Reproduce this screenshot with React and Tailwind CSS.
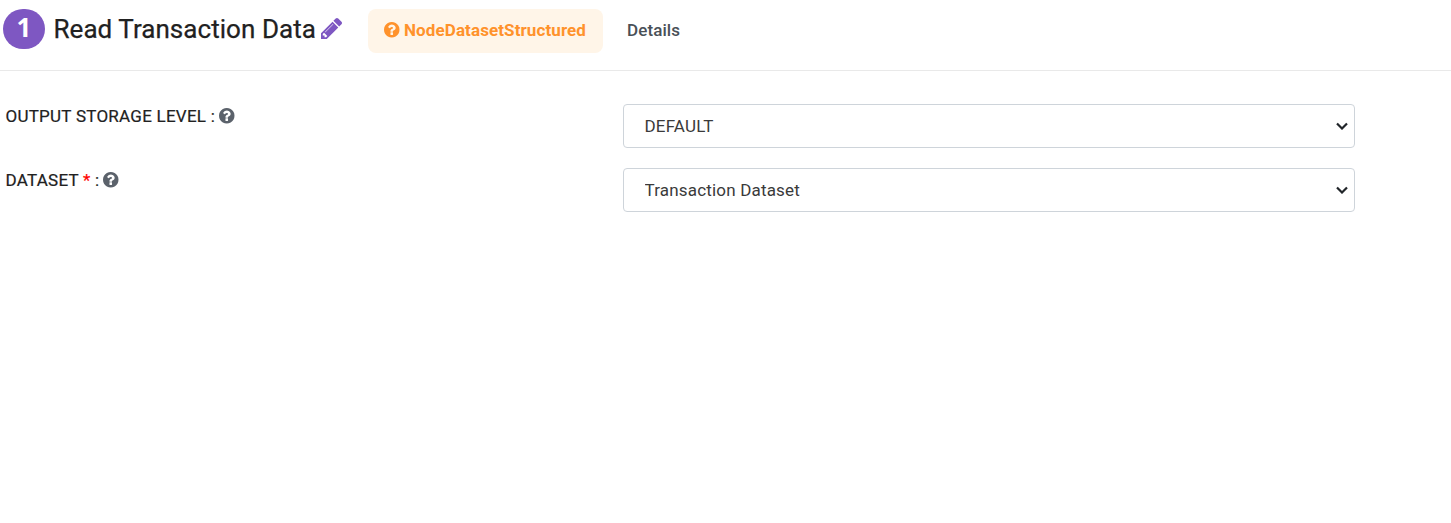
const QUESTION =
  "M896 1376v-192q0-14-9-23t-23-9H672q-14 0-23 9t-9 23v192q0 14 9 23t23 9h192q14 0 23-9t9-23zm256-672q0-88-55.500-163T958 425t-170-41q-243 0-371 213-15 24 8 42l132 100q7 6 19 6 16 0 25-12 53-68 86-92 34-24 86-24 48 0 85.500 26t37.500 59q0 38-20 61t-68 45q-63 28-115.500 86.500T640 1020v36q0 14 9 23t23 9h192q14 0 23-9t9-23q0-19 21.500-49.500T972 957q32-18 49-28.500t46-35 44.500-48 28-60.500 12.500-81zm384 192q0 209-103 385.500T1153.500 1561 768 1664t-385.500-103T103 1281.500 0 896t103-385.500T382.500 231 768 128t385.500 103T1433 510.500 1536 896z";

function QuestionIcon({ className }) {
  return (
    <svg viewBox="0 128 1536 1536" fill="currentColor" className={className}>
      <path d={QUESTION} />
    </svg>
  );
}

function PencilIcon({ className }) {
  return (
    <svg viewBox="0 149 1515 1515" fill="currentColor" className={className}>
      <path d="M363 1536l91-91-235-235-91 91v107h128v128h107zm523-928q0-22-22-22-10 0-17 7l-542 542q-7 7-7 17 0 22 22 22 10 0 17-7l542-542q7-7 7-17zm-54-192l416 416-832 832H0v-416zm683 96q0 53-37 90l-166 166-416-416 166-165q36-38 90-38 53 0 91 38l235 234q37 39 37 91z" />
    </svg>
  );
}

function Field({ label, required, value }) {
  return (
    <div className="flex h-11">
      <div className="flex h-[25px] w-[617.500px] items-center text-[17px] text-[#212121]">
        <span className="pt-px tracking-[0.250px] whitespace-pre [-webkit-text-stroke:0.200px_currentColor]">
          {label} {required && <span className="text-[#ff0000]">* </span>}:
        </span>
        <QuestionIcon className="mb-px ml-1 size-[15.500px] text-[#5b626b]" />
      </div>
      <div className="grid w-[732px] items-center">
        <select className="col-start-1 row-start-1 h-11 w-full appearance-none rounded-[4px] border border-[#ced4da] bg-white pt-[2px] pl-[20.500px] text-[17px] tracking-[0.180px] text-[#3a3a3a]">
          <option>{value}</option>
        </select>
        <svg viewBox="0 0 12 8" className="pointer-events-none col-start-1 row-start-1 mr-[7px] h-2 w-3 justify-self-end" fill="none" stroke="#212529" strokeWidth="2.200">
          <path d="M1 1.500 6 6.500 11 1.500" />
        </svg>
      </div>
    </div>
  );
}

export default function App() {
  return (
    <div className="h-[523px] bg-white font-['Roboto',sans-serif]">
      <header className="flex h-[71px] border-b border-[#e9e9e9] pl-[3px]">
        <div className="mt-[9px] flex h-10 w-[42px] items-center justify-center rounded-full bg-[#7e57c2] pb-[3px] font-['Open_Sans',sans-serif] text-[26px] font-bold text-white">1</div>
        <h1 className="mt-[9px] ml-[8.500px] w-[262.500px] text-[26px] leading-10 tracking-[0.050px] whitespace-nowrap text-[#212121] [-webkit-text-stroke:0.250px_#212121]">Read Transaction Data</h1>
        <PencilIcon className="mt-[18px] ml-[5px] size-[21px] text-[#7e57c2]" />
        <div className="mt-[9px] ml-[26px] flex h-[44px] w-[235px] items-center rounded-lg bg-[#fff5e8] pl-4 text-[17px] font-bold tracking-[0.1px] text-[#ff922b]">
          <QuestionIcon className="mr-[4.500px] mb-[2px] size-[15.500px]" />
          NodeDatasetStructured
        </div>
        <span className="mt-[9px] ml-6 text-[17px] leading-[43px] font-medium tracking-[0.100px] text-[#495057]">Details</span>
      </header>
      <main className="flex flex-col gap-5 pt-[33px] pl-[5.500px]">
        <Field label="OUTPUT STORAGE LEVEL" value="DEFAULT" />
        <Field label="DATASET" required value="Transaction Dataset" />
      </main>
    </div>
  );
}
